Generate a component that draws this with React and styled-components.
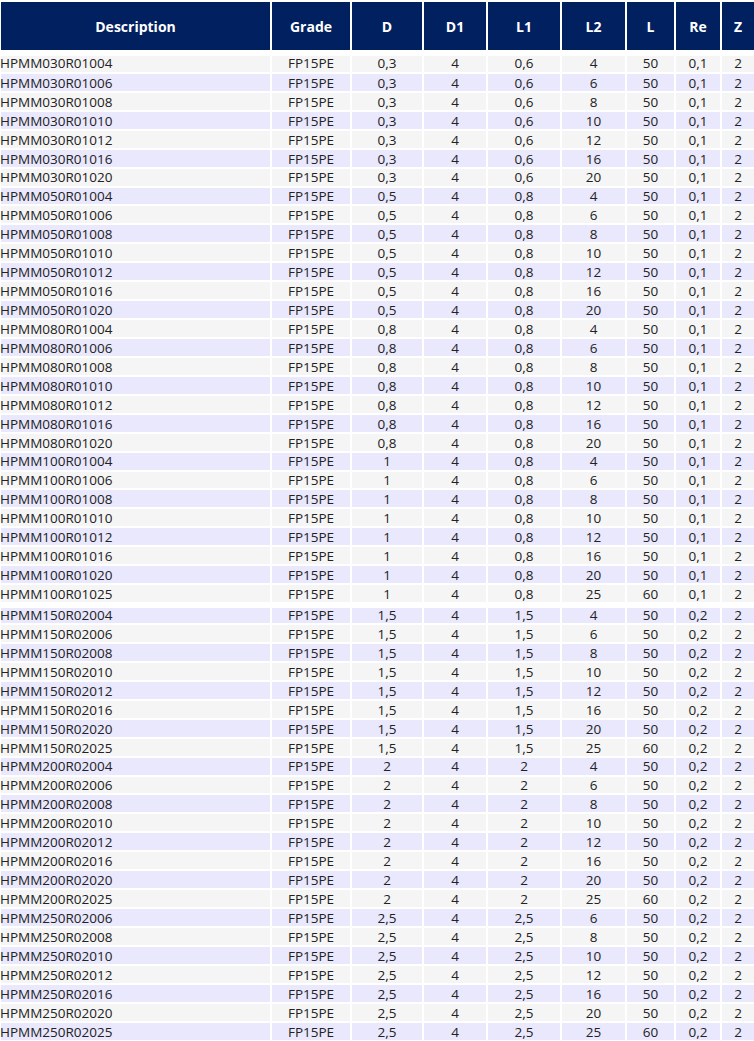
import React from "react";
import styled, { createGlobalStyle } from "styled-components";

const Global = createGlobalStyle`
  html, body { margin: 0; padding: 0; background: #fff; }
  body { font-family: "Open Sans", sans-serif; }
`;

const COLS = "269px 78px 70px 62px 72px 63px 47px 44px 32px";

const Sheet = styled.div`
  display: flex;
  flex-direction: column;
  gap: 2px;
  width: 754px;
  height: 1041px;
  padding: 2px 0 0 1px;
  box-sizing: border-box;
  overflow: hidden;
`;
const HeaderRow = styled.div`
  display: grid;
  grid-template-columns: ${COLS};
  column-gap: 2px;
  margin-bottom: 4px;
`;
const HeaderCell = styled.div`
  height: 48px;
  background: #002060;
  color: #fff;
  font: 700 14px "Open Sans", sans-serif;
  display: flex;
  align-items: center;
  justify-content: center;
`;
const Row = styled.div`
  display: grid;
  grid-template-columns: ${COLS};
  grid-template-rows: ${(p) => p.$height}px;
  column-gap: 2px;
  flex: none;
  margin-top: ${(p) => p.$offset}px;
`;
const Cell = styled.div`
  box-sizing: border-box;
  min-height: 0;
  background: ${(p) => (p.$alt ? "#e9e8fd" : "#f5f5f5")};
  color: #222;
  font: 400 13.5px/14px "Open Sans", sans-serif;
  padding-top: ${(p) => p.$pad}px;
  text-align: ${(p) => (p.$left ? "left" : "center")};
  text-indent: ${(p) => (p.$left ? "-1px" : "0")};
  white-space: nowrap;
`;

const heads = ["Description", "Grade", "D", "D1", "L1", "L2", "L", "Re", "Z"];
const groups = [
  ["030R010", "0,3", "0,6", "0,1", [4, 6, 8, 10, 12, 16, 20]],
  ["050R010", "0,5", "0,8", "0,1", [4, 6, 8, 10, 12, 16, 20]],
  ["080R010", "0,8", "0,8", "0,1", [4, 6, 8, 10, 12, 16, 20]],
  ["100R010", "1", "0,8", "0,1", [4, 6, 8, 10, 12, 16, 20, 25]],
  ["150R020", "1,5", "1,5", "0,2", [4, 6, 8, 10, 12, 16, 20, 25]],
  ["200R020", "2", "2", "0,2", [4, 6, 8, 10, 12, 16, 20, 25]],
  ["250R020", "2,5", "2,5", "0,2", [6, 8, 10, 12, 16, 20, 25]],
];
const rows = groups.flatMap(([code, d, l1, re, l2s]) =>
  l2s.map((l2) => [
    `HPMM${code}${String(l2).padStart(2, "0")}`,
    "FP15PE",
    d,
    "4",
    l1,
    String(l2),
    l2 === 25 ? "60" : "50",
    re,
    "2",
  ])
);

// Row heights and text offsets vary by a pixel in the source table (zero-based row index).
const heightOf = (i) => {
  if (i === 29) return 15;
  return [0, 7, 22, 38].includes(i) ? 16 : 17;
};
const padOf = (i) => {
  if (i === 0 || i === 29) return 0;
  return [6, 7, 21, 22, 37, 38].includes(i) ? 1 : 2;
};

export default function App() {
  return (
    <Sheet>
      <Global />
      <HeaderRow>
        {heads.map((h) => (
          <HeaderCell key={h}>{h}</HeaderCell>
        ))}
      </HeaderRow>
      {rows.map((r, i) => (
        <Row key={r[0]} $height={heightOf(i)} $offset={i === 29 ? 4 : 0}>
          {r.map((v, j) => (
            <Cell key={j} $alt={i % 2 === 1} $left={j === 0} $pad={padOf(i)}>
              {v}
            </Cell>
          ))}
        </Row>
      ))}
    </Sheet>
  );
}
